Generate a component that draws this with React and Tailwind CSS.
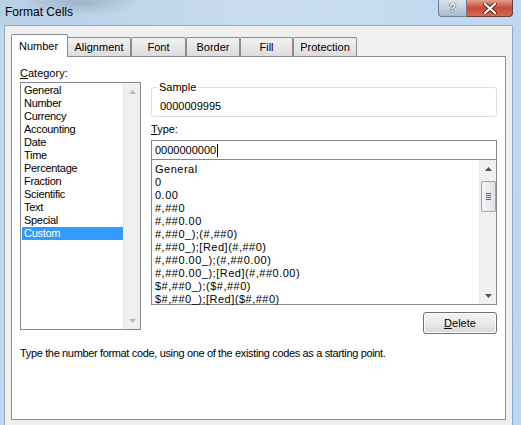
import React from "react";

const categories = [
  "General", "Number", "Currency", "Accounting", "Date", "Time",
  "Percentage", "Fraction", "Scientific", "Text", "Special", "Custom",
];

const formats = [
  "General", "0", "0.00", "#,##0", "#,##0.00",
  "#,##0_);(#,##0)", "#,##0_);[Red](#,##0)", "#,##0.00_);(#,##0.00)",
  "#,##0.00_);[Red](#,##0.00)", "$#,##0_);($#,##0)", "$#,##0_);[Red]($#,##0)",
];

const tabs = [
  { label: "Alignment", w: "w-[64px]" },
  { label: "Font", w: "w-[55px]" },
  { label: "Border", w: "w-[54px]" },
  { label: "Fill", w: "w-[53px]" },
  { label: "Protection", w: "w-[64px]" },
];

const Arrow = ({ up, dim }) => (
  <svg width="7" height="4" viewBox="0 0 7 4">
    <path d={up ? "M0 4 L3.5 0 L7 4 Z" : "M0 0 L3.5 4 L7 0 Z"} fill={dim ? "#b8bcc2" : "#4d5259"} />
  </svg>
);

// Scroll track with arrows, optional thumb
const ScrollBar = ({ dim, thumb }) => (
  <div className="w-[17px] h-full flex flex-col items-center bg-[#f0f0f0] border-l border-[#e8e8e8]">
    <div className="h-[17px] w-full flex items-center justify-center">
      <Arrow up dim={dim} />
    </div>
    {thumb && (
      <div className="w-[15px] h-[31px] mt-[4px] rounded-[2px] border border-[#9ba5b0] bg-gradient-to-r from-[#f4f5f6] to-[#dfe2e6] flex flex-col items-center justify-center gap-[1px]">
        <div className="w-[5px] h-px bg-[#5c6470]" />
        <div className="w-[5px] h-px bg-[#5c6470]" />
        <div className="w-[5px] h-px bg-[#5c6470]" />
        <div className="w-[5px] h-px bg-[#5c6470]" />
      </div>
    )}
    <div className="flex-1" />
    <div className="h-[17px] w-full flex items-center justify-center">
      <Arrow dim={dim} />
    </div>
  </div>
);

export default function App() {
  return (
    <div className="w-[521px] h-[425px] overflow-hidden flex flex-col bg-gradient-to-b from-[#c3d8ee] to-[#bcd5f0] text-[11px] leading-[13px] text-black font-['Liberation_Sans',Arial,sans-serif]">
      {/* title bar */}
      <div className="h-[25px] flex items-start justify-between bg-[radial-gradient(ellipse_60px_14px_at_80px_2px,#9fb3c8,transparent),linear-gradient(to_right,#b9cfe6,#c9dcf0,#c2d8ef)]">
        <div className="pl-[5px] pt-[5px] text-[12px] leading-[15px] text-black">Format Cells</div>
        <div className="flex mr-[8px]">
          <div className="w-[29px] h-[17px] rounded-bl-[4px] border border-t-0 border-[#6d7f95] bg-gradient-to-b from-[#dbe5f0] to-[#a9bccf] flex items-center justify-center text-[12px] font-bold text-white [text-shadow:0_0_1px_#1c2a3a,0_0_1px_#1c2a3a]">
            ?
          </div>
          <div className="w-[46px] h-[17px] rounded-br-[4px] border border-t-0 border-l-0 border-[#6d3a35] bg-gradient-to-b from-[#e39a8c] via-[#c94a3a] to-[#d26a50] flex items-center justify-center">
            <svg width="14" height="11" viewBox="0 0 14 11">
              <path d="M2 1 L12 10 M12 1 L2 10" stroke="#5a1b14" strokeWidth="4" strokeLinecap="square" />
              <path d="M2 1 L12 10 M12 1 L2 10" stroke="#ffffff" strokeWidth="2.2" strokeLinecap="square" />
            </svg>
          </div>
        </div>
      </div>

      {/* dialog body */}
      <div className="flex-1 ml-[4px] w-[509px] bg-[#f0f0f0] border border-b-0 border-[#97a9bf] flex flex-col pl-[6px]">
        {/* tabs */}
        <div className="flex items-end pt-[8px]">
          <div className="w-[57px] h-[23px] -mb-px relative z-10 bg-white border border-b-0 border-[#898c95] rounded-t-[2px] pl-[7px] pt-[5px]">
            Number
          </div>
          {tabs.map((t) => (
            <div
              key={t.label}
              className={`${t.w} h-[19px] -ml-px mr-[1px] border border-b-0 border-[#898c95] rounded-t-[2px] bg-gradient-to-b from-[#f3f3f3] to-[#dcdcdc] flex items-center justify-center`}
            >
              {t.label}
            </div>
          ))}
        </div>

        {/* tab panel */}
        <div className="w-[495px] h-[364px] bg-white border border-[#898c95] pl-[8px] pt-[9px]">
          <div className="flex">
            {/* category column */}
            <div className="w-[121px] flex flex-col">
              <div className="h-[14px] leading-[14px]">
                <span className="underline">C</span>ategory:
              </div>
              <div className="mt-[2px] h-[248px] border border-[#828790] flex">
                <div className="flex-1 pt-[1px] pl-px tracking-[-0.3px]">
                  {categories.map((c) => (
                    <div
                      key={c}
                      className={`h-[13px] pl-[2px] ${c === "Custom" ? "bg-[#3399ff] text-white" : ""}`}
                    >
                      {c}
                    </div>
                  ))}
                </div>
                <ScrollBar dim />
              </div>
            </div>

            {/* type column */}
            <div className="ml-[10px] w-[346px] flex flex-col">
              <fieldset className="mt-[15px] h-[36px] border border-[#d5dfe5] rounded-[3px] pl-[8px]">
                <legend className="ml-[-3px] px-[2px] leading-[13px]">Sample</legend>
                <div className="pt-[6px]">0000009995</div>
              </fieldset>
              <div className="mt-[5px] h-[14px] leading-[14px]">
                <span className="underline">T</span>ype:
              </div>
              <div className="mt-[4px] h-[20px] border border-[#828790] flex items-center pl-[3px]">
                0000000000<span className="ml-px w-px h-[13px] bg-black" />
              </div>
              <div className="-mt-px h-[146px] border border-[#828790] flex">
                <div className="flex-1 pl-[3px] pt-[3px] tracking-[0.5px]">
                  {formats.map((f) => (
                    <div key={f} className="h-[13px] whitespace-nowrap">{f}</div>
                  ))}
                </div>
                <ScrollBar thumb />
              </div>
              <div className="mt-[7px] self-end w-[74px] h-[22px] rounded-[3px] border border-[#707070] bg-gradient-to-b from-[#f2f2f2] via-[#ebebeb] to-[#d6d6d6] flex items-center justify-center shadow-[inset_0_0_0_1px_#fcfcfc]">
                <span><span className="underline">D</span>elete</span>
              </div>
            </div>
          </div>
          <div className="mt-[13px] tracking-[-0.35px]">
            Type the number format code, using one of the existing codes as a starting point.
          </div>
        </div>
      </div>
    </div>
  );
}
